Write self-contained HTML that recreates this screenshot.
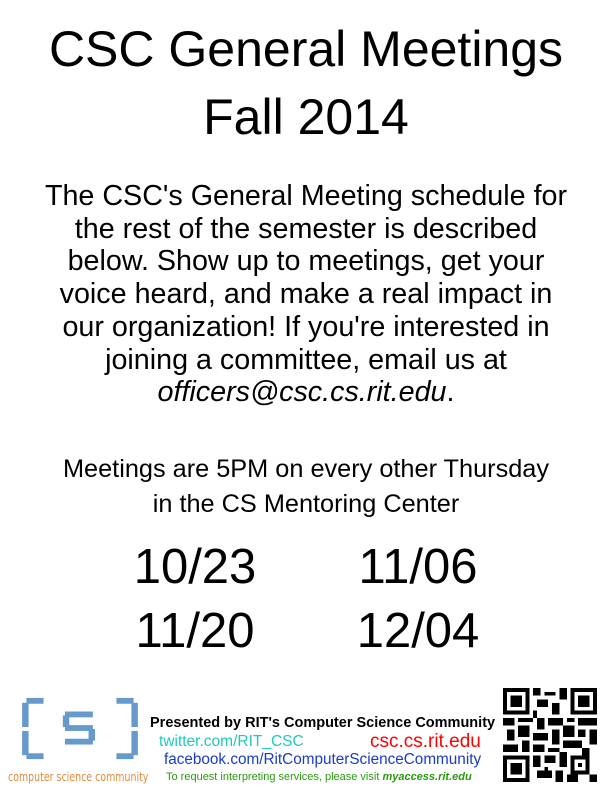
<!DOCTYPE html>
<html><head><meta charset="utf-8"><style>
*{margin:0;padding:0}
body{width:612px;height:792px;background:#fff;position:relative;overflow:hidden;font-family:"Liberation Sans","DejaVu Sans",sans-serif;color:#000}
.c{position:absolute;left:0;width:612px;text-align:center;white-space:nowrap}
.t{font-size:50px;line-height:68px}
.p{font-size:28.7px;line-height:32.7px}
.m{font-size:25.3px;line-height:35px}
.d{position:absolute;font-size:49px;width:220px;text-align:center}
.ft{position:absolute;white-space:nowrap}
</style></head><body>
<div class="c t" style="top:15px">CSC General Meetings</div>
<div class="c t" style="top:83px">Fall 2014</div>
<div class="c p" style="top:180px">The CSC's General Meeting schedule for<br>the rest of the semester is described<br>below. Show up to meetings, get your<br>voice heard, and make a real impact in<br>our organization! If you're interested in<br>joining a committee, email us at<br><i>officers@csc.cs.rit.edu</i>.</div>
<div class="c m" style="top:452px">Meetings are 5PM on every other Thursday<br>in the CS Mentoring Center</div>
<div class="d" style="left:85px;top:539px">10/23</div>
<div class="d" style="left:308px;top:539px">11/06</div>
<div class="d" style="left:85px;top:603px">11/20</div>
<div class="d" style="left:308px;top:603px">12/04</div>

<svg style="position:absolute;left:20px;top:695px" width="120" height="68" viewBox="0 0 112 70" preserveAspectRatio="none">
<g fill="#6699cc">
<rect x="6" y="3" width="16" height="6"/><rect x="2" y="8" width="6" height="25"/><rect x="2" y="37" width="6" height="25"/><rect x="6" y="60" width="16" height="6"/>
<rect x="90" y="3" width="16" height="6"/><rect x="104" y="8" width="6" height="25"/><rect x="104" y="37" width="6" height="25"/><rect x="90" y="60" width="16" height="6"/>
<rect x="42" y="17" width="26" height="6"/><rect x="40" y="21" width="6" height="12"/><rect x="42" y="31" width="26" height="6"/><rect x="64" y="35" width="6" height="12"/><rect x="42" y="45" width="26" height="6"/>
</g></svg>
<div class="ft" style="left:8px;top:769px;font-size:12.5px;color:#e08a3c;font-family:'DejaVu Sans Condensed','Liberation Sans Narrow',sans-serif;transform:scaleX(0.84);transform-origin:left">computer science community</div>
<div class="ft" style="left:150px;top:715px;font-size:14.5px;font-weight:bold">Presented by RIT's Computer Science Community</div>
<div class="ft" style="left:159px;top:733px;font-size:15.5px;color:#22c8c0">twitter.com/RIT_CSC</div>
<div class="ft" style="left:370px;top:731px;font-size:19px;color:#f00">csc.cs.rit.edu</div>
<div class="ft" style="left:164px;top:751px;font-size:15.3px;color:#1a3cc8">facebook.com/RitComputerScienceCommunity</div>
<div class="ft" style="left:166px;top:771px;font-size:11px;color:#2a9a10">To request interpreting services, please visit <b><i>myaccess.rit.edu</i></b></div>

<svg style="position:absolute;left:503px;top:688px" width="94" height="94" viewBox="0 0 25 25" shape-rendering="crispEdges">
<g fill="#000">
<path d="M0 0h7v7h-7zM1 1v5h5v-5zM2 2h3v3h-3z" fill-rule="evenodd"/>
<path d="M18 0h7v7h-7zM19 1v5h5v-5zM20 2h3v3h-3z" fill-rule="evenodd"/>
<path d="M0 18h7v7h-7zM1 19v5h5v-5zM2 20h3v3h-3z" fill-rule="evenodd"/>
<rect x="8" y="0" width="2" height="2"/><rect x="11" y="1" width="3" height="1"/><rect x="15" y="0" width="2" height="3"/><rect x="9" y="3" width="3" height="2"/><rect x="13" y="4" width="2" height="3"/><rect x="8" y="6" width="1" height="2"/>
<rect x="0" y="8" width="3" height="2"/><rect x="4" y="8" width="4" height="1"/><rect x="9" y="8" width="2" height="3"/><rect x="12" y="8" width="4" height="2"/><rect x="17" y="8" width="2" height="1"/><rect x="20" y="8" width="5" height="2"/>
<rect x="1" y="11" width="2" height="3"/><rect x="4" y="10" width="3" height="3"/><rect x="8" y="12" width="4" height="2"/><rect x="13" y="11" width="2" height="4"/><rect x="16" y="10" width="3" height="3"/><rect x="20" y="11" width="2" height="2"/><rect x="23" y="11" width="2" height="4"/>
<rect x="0" y="15" width="4" height="2"/><rect x="5" y="14" width="2" height="3"/><rect x="8" y="15" width="3" height="2"/><rect x="12" y="16" width="3" height="1"/><rect x="16" y="14" width="5" height="2"/><rect x="21" y="16" width="2" height="2"/>
<rect x="8" y="18" width="2" height="3"/><rect x="11" y="18" width="3" height="2"/><rect x="15" y="17" width="2" height="4"/><rect x="18" y="18" width="5" height="5"/><rect x="9" y="22" width="4" height="2"/><rect x="14" y="22" width="2" height="3"/><rect x="11" y="21" width="1" height="1"/><rect x="23" y="23" width="2" height="2"/><rect x="17" y="23" width="3" height="2"/>
</g><rect x="19" y="19" width="3" height="3" fill="#fff"/><rect x="20" y="20" width="1" height="1"/>
</svg>
</body></html>
